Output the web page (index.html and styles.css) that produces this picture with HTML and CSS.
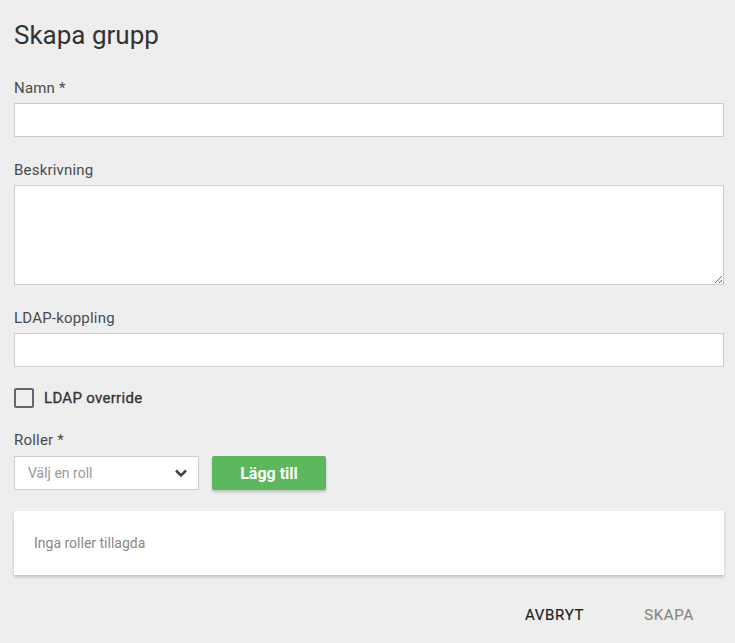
FILE: index.html
```html
<!DOCTYPE html>
<html lang="sv">
<head>
<meta charset="utf-8">
<title>Skapa grupp</title>
<link rel="stylesheet" href="styles.css">
</head>
<body>
<div class="page">
  <h1 class="title">Skapa grupp</h1>
  <form class="form">
    <div class="field">
      <label class="label" for="namn">Namn *</label>
      <input class="input" id="namn" type="text">
    </div>
    <div class="field">
      <label class="label" for="beskr">Beskrivning</label>
      <textarea class="input textarea" id="beskr"></textarea>
    </div>
    <div class="field">
      <label class="label" for="ldap">LDAP-koppling</label>
      <input class="input" id="ldap" type="text">
    </div>
    <label class="check">
      <span class="box"></span>
      <span class="check-text">LDAP override</span>
    </label>
    <div class="field roles">
      <span class="label">Roller *</span>
      <div class="role-row">
        <div class="select">
          <span class="placeholder">Välj en roll</span>
          <svg class="chev" width="14" height="10" viewBox="0 0 14 10"><path d="M2 2.5 L7 7.5 L12 2.5" fill="none" stroke="#444" stroke-width="2.6" stroke-linecap="butt"/></svg>
        </div>
        <button type="button" class="btn-add">Lägg till</button>
      </div>
    </div>
    <div class="card">Inga roller tillagda</div>
    <div class="actions">
      <button type="button" class="btn-text">AVBRYT</button>
      <button type="button" class="btn-text disabled">SKAPA</button>
    </div>
  </form>
</div>
</body>
</html>
```
FILE: styles.css
```css
html, body {
  margin: 0;
  padding: 0;
  background: #eeeeee;
}
body {
  font-family: Roboto, "Noto Sans", "Liberation Sans", sans-serif;
  color: #333;
}
.page {
  padding: 20px 11px 0 14px;
}
.title {
  margin: 0;
  font-size: 26px;
  line-height: 30px;
  font-weight: 400;
  color: #333;
}
.form {
  display: flex;
  flex-direction: column;
  margin-top: 28px;
}
.field {
  display: flex;
  flex-direction: column;
  gap: 5px;
  margin-bottom: 23px;
}
.label {
  font-size: 15px;
  line-height: 20px;
  letter-spacing: 0.2px;
  color: #4a4a4a;
}
.input {
  box-sizing: border-box;
  height: 34px;
  width: 100%;
  border: 1px solid #cccccc;
  background: #fff;
  margin: 0;
  padding: 6px 12px;
  font-family: inherit;
  font-size: 14px;
  border-radius: 0;
  outline: none;
}
.textarea {
  height: 100px;
  resize: vertical;
  display: block;
}
.check {
  display: flex;
  align-items: center;
  gap: 10px;
  margin-top: -2px;
  margin-bottom: 22px;
  height: 20px;
}
.box {
  box-sizing: border-box;
  width: 20px;
  height: 20px;
  border: 2px solid #666;
  border-radius: 2px;
}
.check-text {
  font-size: 15px;
  font-weight: 400;
  letter-spacing: 0.3px;
  color: #333;
  -webkit-text-stroke: 0.3px #333;
}
.roles {
  gap: 6px;
  margin-bottom: 21px;
}
.role-row {
  display: flex;
  gap: 13px;
}
.select {
  box-sizing: border-box;
  width: 185px;
  height: 34px;
  border: 1px solid #cccccc;
  background: #fff;
  display: flex;
  align-items: center;
  justify-content: space-between;
  padding: 0 10px 0 13px;
}
.placeholder {
  font-size: 14px;
  color: #999;
}
.chev {
  display: block;
}
.btn-add {
  width: 114px;
  height: 34px;
  border: none;
  border-radius: 2px;
  background: #5cb85c;
  color: #fff;
  font-family: inherit;
  font-size: 16px;
  font-weight: 700;
  box-shadow: 0 2px 3px rgba(0, 0, 0, 0.2);
}
.card {
  background: #fff;
  height: 64px;
  box-sizing: border-box;
  padding: 0 20px;
  display: flex;
  align-items: center;
  font-size: 14px;
  color: #888;
  box-shadow: 0 2px 3px rgba(0, 0, 0, 0.2);
}
.actions {
  display: flex;
  justify-content: flex-end;
  gap: 28px;
  padding-right: 14px;
  margin-top: 22px;
}
.btn-text {
  background: none;
  border: none;
  height: 36px;
  padding: 0 16px;
  font-family: inherit;
  font-size: 15px;
  font-weight: 400;
  letter-spacing: 0.7px;
  color: #222;
  -webkit-text-stroke: 0.2px #222;
}
.btn-text.disabled {
  color: #888;
  -webkit-text-stroke: 0.2px #888;
}
```
